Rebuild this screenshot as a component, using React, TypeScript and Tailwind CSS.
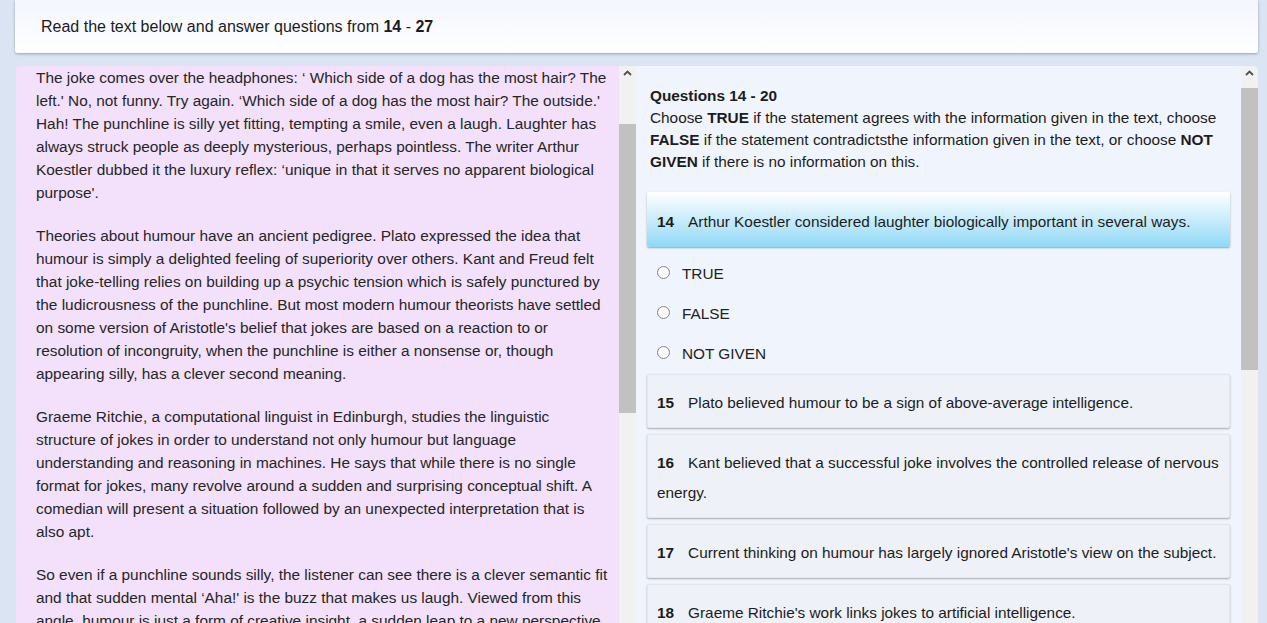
import type { ReactNode } from "react";

const passage = [
  "The joke comes over the headphones: ‘ Which side of a dog has the most hair? The left.' No, not funny. Try again. ‘Which side of a dog has the most hair? The outside.' Hah! The punchline is silly yet fitting, tempting a smile, even a laugh. Laughter has always struck people as deeply mysterious, perhaps pointless. The writer Arthur Koestler dubbed it the luxury reflex: ‘unique in that it serves no apparent biological purpose'.",
  "Theories about humour have an ancient pedigree. Plato expressed the idea that humour is simply a delighted feeling of superiority over others. Kant and Freud felt that joke-telling relies on building up a psychic tension which is safely punctured by the ludicrousness of the punchline. But most modern humour theorists have settled on some version of Aristotle's belief that jokes are based on a reaction to or resolution of incongruity, when the punchline is either a nonsense or, though appearing silly, has a clever second meaning.",
  "Graeme Ritchie, a computational linguist in Edinburgh, studies the linguistic structure of jokes in order to understand not only humour but language understanding and reasoning in machines. He says that while there is no single format for jokes, many revolve around a sudden and surprising conceptual shift. A comedian will present a situation followed by an unexpected interpretation that is also apt.",
  "So even if a punchline sounds silly, the listener can see there is a clever semantic fit and that sudden mental ‘Aha!' is the buzz that makes us laugh. Viewed from this angle, humour is just a form of creative insight, a sudden leap to a new perspective.",
];

const questions = [
  { no: 15, text: "Plato believed humour to be a sign of above-average intelligence." },
  { no: 16, text: "Kant believed that a successful joke involves the controlled release of nervous energy." },
  { no: 17, text: "Current thinking on humour has largely ignored Aristotle's view on the subject." },
  { no: 18, text: "Graeme Ritchie's work links jokes to artificial intelligence." },
  { no: 19, text: "Ritchie's research showed that jokes follow no set format." },
];

export default function App() {
  return (
    <div className="h-[623px] overflow-hidden bg-[#dbe4f3] pl-[15px] pr-[9px] font-['Liberation_Sans',Arial,sans-serif] text-[#1c1c1c]">
      <header className="flex h-[53px] items-center rounded-b-[3px] bg-gradient-to-b from-[#f3f6fd] to-white pl-[26px] text-[16px] shadow-[0_1px_3px_rgba(0,0,0,0.3)]">
        <p>
          Read the text below and answer questions from <b>14</b> - <b>27</b>
        </p>
      </header>

      <main className="ml-px mt-[13px] flex h-[557px]">
        <section className="flex w-[620px] overflow-hidden rounded-tl-[4px] bg-[#f3e1fb]">
          <div className="flex-1 overflow-hidden pl-[20px] pr-[8px] text-[15.4px] leading-[23px] text-[#262626]">
            {passage.map((para, i) => (
              <p key={i} className="mb-[20px]">{para}</p>
            ))}
          </div>
          <Scrollbar buttonHeight={58} thumbHeight={289} />
        </section>

        <section className="flex flex-1 overflow-hidden rounded-tr-[5px] bg-[#f0f4fc]">
          <div className="flex-1 overflow-hidden pl-[11px] pr-[11px] pt-[19px]">
            <div className="pl-[3px] text-[15.35px] leading-[22px]">
              <p className="font-bold">Questions 14 - 20</p>
              <p>
                Choose <b>TRUE</b> if the statement agrees with the information given in the text, choose <b>FALSE</b> if the statement contradictsthe information given in the text, or choose <b>NOT GIVEN</b> if there is no information on this.
              </p>
            </div>

            <div className="mt-[19px] rounded-[2px] bg-gradient-to-b from-white to-[#8ed8f7] pb-[10px] pl-[10px] pr-[4px] pt-[15px] text-[15.35px] leading-[30px] shadow-[0_1px_2px_rgba(0,0,0,0.35)]">
              <QuestionText no={14}>Arthur Koestler considered laughter biologically important in several ways.</QuestionText>
            </div>

            <div className="pt-[7px]">
              {["TRUE", "FALSE", "NOT GIVEN"].map((opt) => (
                <label key={opt} className="flex h-[40px] items-center pl-[10px] text-[15.35px] text-[#222]">
                  <span className="mb-[3px] h-[13px] w-[13px] rounded-full border-[1.5px] border-[#858585] bg-[#fafafa]" />
                  <span className="ml-[12px]">{opt}</span>
                </label>
              ))}
            </div>

            <div className="flex flex-col gap-[6px]">
              {questions.map((q) => (
                <div key={q.no} className="rounded-[2px] border border-[#e2e6ee] bg-[#eef2f8] pb-[9px] pl-[9px] pr-[4px] pt-[13px] text-[15.35px] leading-[30px] shadow-[0_1px_2px_rgba(0,0,0,0.3)]">
                  <QuestionText no={q.no}>{q.text}</QuestionText>
                </div>
              ))}
            </div>
          </div>
          <Scrollbar buttonHeight={22} thumbHeight={282} />
        </section>
      </main>
    </div>
  );
}

function QuestionText({ no, children }: { no: number; children: ReactNode }) {
  return (
    <p>
      <b className="mr-[14px]">{no}</b>
      {children}
    </p>
  );
}

function Scrollbar({ buttonHeight, thumbHeight }: { buttonHeight: number; thumbHeight: number }) {
  return (
    <div className="flex w-[17px] shrink-0 flex-col bg-[#f1f1f1]">
      <div className="flex justify-center pt-[4px]" style={{ height: buttonHeight }}>
        <svg width="9" height="6" viewBox="0 0 9 6">
          <path d="M1 5 L4.5 1.5 L8 5" fill="none" stroke="#505050" strokeWidth="1.8" />
        </svg>
      </div>
      <div className="bg-[#c1c1c1]" style={{ height: thumbHeight }} />
    </div>
  );
}
